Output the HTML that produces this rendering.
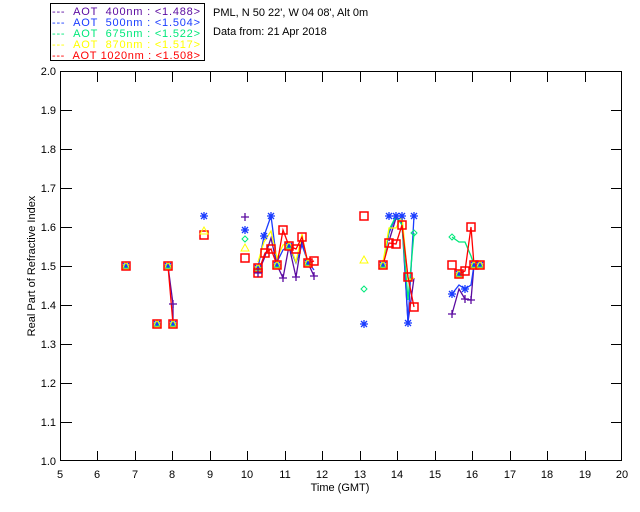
<!DOCTYPE html>
<html><head><meta charset="utf-8"><style>
html,body{margin:0;padding:0;background:#fff}
svg{display:block}
text{font-family:"Liberation Sans",sans-serif;font-size:11px}
</style></head><body>
<svg width="640" height="512" viewBox="0 0 640 512" xmlns="http://www.w3.org/2000/svg">
<defs>
<g id="sq"><rect x="-4" y="-4" width="8" height="8" fill="none" stroke="#f00" stroke-width="1.5"/></g>
<g id="ast" stroke="#1a3cff" stroke-width="1.3"><path d="M-4 0H4M0 -4V4M-3 -3L3 3M-3 3L3 -3"/></g>
<g id="pl" stroke="#5a0aa0" stroke-width="1.3"><path d="M-4 0H4M0 -4V4"/></g>
<g id="dm"><path d="M0 -3L3 0L0 3L-3 0Z" fill="none" stroke="#00e87a"/></g>
<g id="tr"><path d="M0 -4L4 3H-4Z" fill="none" stroke="#ff0"/></g>
<g id="full"><use href="#ast"/><use href="#dm"/><use href="#tr"/><use href="#sq"/></g>
</defs>
<!-- legend -->
<rect x="50.5" y="3.5" width="154" height="57" fill="none" stroke="#000"/>
<g font-size="11">
<text x="52" y="15" fill="#5a0aa0" textLength="148" lengthAdjust="spacing">--- &#160;AOT &#160;400nm : &lt;1.488&gt;</text>
<text x="52" y="26" fill="#1a3cff" textLength="148" lengthAdjust="spacing">--- &#160;AOT &#160;500nm : &lt;1.504&gt;</text>
<text x="52" y="37" fill="#00e87a" textLength="148" lengthAdjust="spacing">--- &#160;AOT &#160;675nm : &lt;1.522&gt;</text>
<text x="52" y="48" fill="#ff0" textLength="148" lengthAdjust="spacing">--- &#160;AOT &#160;870nm : &lt;1.517&gt;</text>
<text x="52" y="59" fill="#f00" textLength="148" lengthAdjust="spacing">--- &#160;AOT 1020nm : &lt;1.508&gt;</text>
</g>
<text x="213" y="16">PML, N 50 22', W 04 08', Alt 0m</text>
<text x="213" y="35">Data from: 21 Apr 2018</text>
<!-- axes -->
<rect x="60.5" y="71.5" width="561" height="389" fill="none" stroke="#000"/>
<g stroke="#000" fill="none">
<path d="M97.5 461v-10M135.5 461v-10M172.5 461v-10M210.5 461v-10M247.5 461v-10M285.5 461v-10M322.5 461v-10M360.5 461v-10M397.5 461v-10M435.5 461v-10M472.5 461v-10M510.5 461v-10M547.5 461v-10M585.5 461v-10"/>
<path d="M97.5 72v10M135.5 72v10M172.5 72v10M210.5 72v10M247.5 72v10M285.5 72v10M322.5 72v10M360.5 72v10M397.5 72v10M435.5 72v10M472.5 72v10M510.5 72v10M547.5 72v10M585.5 72v10"/>
<path d="M61 422.5h11M61 383.5h11M61 344.5h11M61 305.5h11M61 266.5h11M61 227.5h11M61 188.5h11M61 149.5h11M61 110.5h11"/>
<path d="M622 422.5h-11M622 383.5h-11M622 344.5h-11M622 305.5h-11M622 266.5h-11M622 227.5h-11M622 188.5h-11M622 149.5h-11M622 110.5h-11"/>
</g>
<g text-anchor="end">
<text x="56" y="465">1.0</text><text x="56" y="426">1.1</text><text x="56" y="387">1.2</text><text x="56" y="348">1.3</text><text x="56" y="309">1.4</text><text x="56" y="270">1.5</text><text x="56" y="231">1.6</text><text x="56" y="192">1.7</text><text x="56" y="153">1.8</text><text x="56" y="114">1.9</text><text x="56" y="75">2.0</text>
</g>
<g text-anchor="middle">
<text x="60" y="478">5</text><text x="97" y="478">6</text><text x="135" y="478">7</text><text x="172" y="478">8</text><text x="210" y="478">9</text><text x="247" y="478">10</text><text x="285" y="478">11</text><text x="322" y="478">12</text><text x="360" y="478">13</text><text x="397" y="478">14</text><text x="435" y="478">15</text><text x="472" y="478">16</text><text x="510" y="478">17</text><text x="547" y="478">18</text><text x="585" y="478">19</text><text x="622" y="478">20</text>
<text x="340" y="491">Time (GMT)</text>
</g>
<text transform="translate(35,266) rotate(-90)" text-anchor="middle">Real Part of Refractive Index</text>
<!-- lines -->
<g fill="none" stroke-width="1.3">
<polyline stroke="#5a0aa0" points="168,266 173,304 173,324"/>
<polyline stroke="#5a0aa0" points="258,273 264,259 271,238 277,265 283,278 289,246 296,277 302,240 308,263 314,276"/>
<polyline stroke="#1a3cff" points="258,268 264,236 271,216 277,262 283,250 289,246 296,263 302,245 308,262 314,270"/>
<polyline stroke="#ff0" points="258,262 264,242 271,231 277,258 283,245 289,243 296,262 302,234 308,266"/>
<polyline stroke="#f00" points="168,266 173,324"/>
<polyline stroke="#f00" points="258,273 265,253 271,249 277,265 283,230 289,246 296,249 302,237 308,263 314,261"/>
<polyline stroke="#5a0aa0" points="389,241 396,218 402,223 408,322 414,278"/>
<polyline stroke="#1a3cff" points="383,265 389,233 396,216 402,216 408,323 414,216"/>
<polyline stroke="#00e87a" points="383,265 389,230 396,216 402,225 408,300 414,233"/>
<polyline stroke="#ff0" points="383,262 389,228 396,228 402,216 408,280 414,278"/>
<polyline stroke="#f00" points="383,265 389,243 396,244 402,225 408,277 414,307"/>
<polyline stroke="#5a0aa0" points="452,314 459,289 465,299 471,300 474,265 480,265"/>
<polyline stroke="#1a3cff" points="452,294 459,285 465,289 471,285 474,265 480,265"/>
<polyline stroke="#00e87a" points="452,237 459,242 465,242 471,256 474,265 480,265"/>
<polyline stroke="#f00" points="459,274 465,271 471,227 474,265 480,265"/>
</g>
<!-- markers -->
<use href="#full" x="126" y="266"/><use href="#full" x="168" y="266"/>
<use href="#full" x="157" y="324"/><use href="#full" x="173" y="324"/>
<use href="#pl" x="173" y="304"/>
<use href="#ast" x="204" y="216"/><use href="#sq" x="204" y="235"/><use href="#tr" x="204" y="231"/>
<use href="#pl" x="245" y="217"/><use href="#ast" x="245" y="230"/><use href="#dm" x="245" y="239"/><use href="#tr" x="245" y="248"/><use href="#sq" x="245" y="258"/>
<use href="#full" x="258" y="268"/><use href="#sq" x="258" y="273"/><use href="#pl" x="258" y="273"/>
<use href="#sq" x="265" y="253"/><use href="#ast" x="264" y="236"/>
<use href="#sq" x="271" y="249"/><use href="#ast" x="271" y="216"/>
<use href="#full" x="277" y="265"/><use href="#pl" x="283" y="278"/>
<use href="#sq" x="283" y="230"/><use href="#full" x="289" y="246"/><use href="#pl" x="296" y="277"/>
<use href="#sq" x="296" y="249"/><use href="#sq" x="302" y="237"/><use href="#full" x="308" y="263"/><use href="#sq" x="314" y="261"/><use href="#pl" x="314" y="276"/>
<use href="#sq" x="364" y="216"/><use href="#tr" x="364" y="260"/><use href="#dm" x="364" y="289"/><use href="#ast" x="364" y="324"/>
<use href="#full" x="383" y="265"/><use href="#sq" x="389" y="243"/><use href="#sq" x="396" y="244"/><use href="#sq" x="402" y="225"/>
<use href="#ast" x="389" y="216"/><use href="#ast" x="396" y="216"/><use href="#ast" x="402" y="216"/><use href="#ast" x="414" y="216"/>
<use href="#sq" x="408" y="277"/><use href="#ast" x="408" y="323"/><use href="#sq" x="414" y="307"/><use href="#dm" x="414" y="233"/>
<use href="#sq" x="452" y="265"/><use href="#ast" x="452" y="294"/><use href="#pl" x="452" y="314"/><use href="#dm" x="452" y="237"/>
<use href="#full" x="459" y="274"/><use href="#sq" x="465" y="271"/><use href="#ast" x="465" y="289"/><use href="#pl" x="465" y="299"/>
<use href="#sq" x="471" y="227"/><use href="#pl" x="471" y="300"/><use href="#full" x="474" y="265"/><use href="#full" x="480" y="265"/>
</svg>
</body></html>
